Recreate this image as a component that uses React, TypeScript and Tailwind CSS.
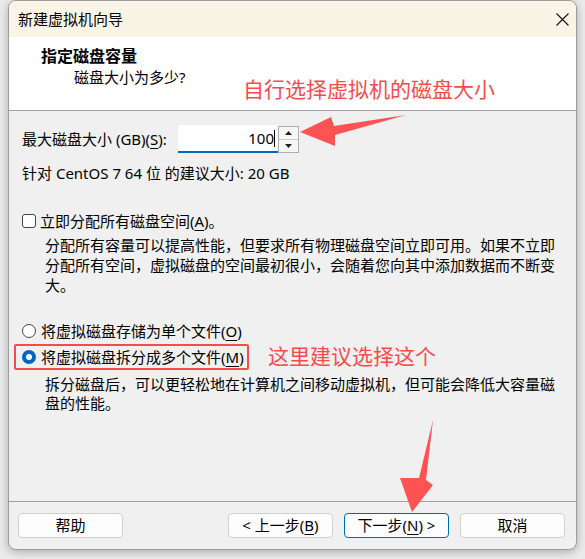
import React from 'react';

const U = ({ children }: { children: React.ReactNode }) => (
  <span className="underline decoration-1 underline-offset-[3px]">{children}</span>
);

const Btn = ({ children, primary }: { children: React.ReactNode; primary?: boolean }) => (
  <button
    className={
      primary
        ? 'flex h-[25px] w-[105px] items-center justify-center rounded-[4px] border border-[#0067c0] bg-[#fdfdfd] text-[15px] leading-none text-black'
        : 'flex h-[25px] w-[105px] items-center justify-center rounded-[4px] border border-[#d0d0d0] bg-[#fdfdfd] text-[15px] leading-none text-black'
    }
  >
    {children}
  </button>
);

export default function App() {
  return (
    <div className="relative h-[559px] w-[585px] overflow-hidden bg-[#ebebeb] font-['Noto_Sans','Noto_Sans_CJK_SC',sans-serif] text-black">
      <div className="ml-[8px] flex h-[550px] w-[569px] flex-col overflow-hidden rounded-[8px] border border-[#9c9c9c] bg-[#f0f0f0] shadow-[0_2px_10px_rgba(0,0,0,0.28)]">
        {/* title bar */}
        <div className="flex h-[36px] items-center justify-between bg-[#f9f4e6] pl-[9px] pr-[7px]">
          <span className="text-[15px]">新建虚拟机向导</span>
          <svg width="13" height="13" viewBox="0 0 13 13">
            <path d="M0.5 0.5 L12.5 12.5 M12.5 0.5 L0.5 12.5" stroke="#111" strokeWidth="1.1" />
          </svg>
        </div>

        {/* header */}
        <div className="relative h-[74px] border-b border-[#a0a0a0] bg-white pt-[9px]">
          <div className="pl-[32px] text-[16px] font-bold leading-[20px]">指定磁盘容量</div>
          <div className="mt-[1px] pl-[65px] text-[15px] leading-[20px]">磁盘大小为多少?</div>
          <div className="absolute left-[234px] top-[38px] text-[21px] leading-[28px] text-[#f54b4b]">
            自行选择虚拟机的磁盘大小
          </div>
        </div>

        {/* body */}
        <div className="flex-1 pl-[13px] text-[15px]">
          <div className="mt-[14px] flex h-[28px] items-center">
            <span className="w-[156px] leading-[20px]">
              最大磁盘大小 (GB)(<U>S</U>):
            </span>
            <div className="flex h-[28px] w-[100px] items-center justify-end border-b-2 border-[#0067c0] bg-white pr-[3px]">
              <span className="leading-[20px]">100</span>
              <span className="h-[17px] w-px bg-black" />
            </div>
            <div className="flex h-[27px] w-[21px] flex-col self-end border border-[#adadad] bg-[#f7f7f7]">
              <div className="flex flex-1 items-center justify-center border-b border-[#c8c8c8]">
                <svg width="7" height="4" viewBox="0 0 7 4">
                  <path d="M0 4 L3.5 0 L7 4 Z" fill="#222" />
                </svg>
              </div>
              <div className="flex flex-1 items-center justify-center">
                <svg width="7" height="4" viewBox="0 0 7 4">
                  <path d="M0 0 L3.5 4 L7 0 Z" fill="#222" />
                </svg>
              </div>
            </div>
          </div>

          <div className="mt-[10px] leading-[20px]">针对 CentOS 7 64 位 的建议大小: 20 GB</div>

          <div className="mt-[28px] flex h-[20px] items-center gap-[4px]">
            <span className="h-[14px] w-[14px] rounded-[3px] border border-[#444] bg-white" />
            <span className="leading-[20px]">
              立即分配所有磁盘空间(<U>A</U>)。
            </span>
          </div>
          <div className="mt-[4px] pl-[23px] leading-[20px]">
            分配所有容量可以提高性能，但要求所有物理磁盘空间立即可用。如果不立即
            <br />
            分配所有空间，虚拟磁盘的空间最初很小，会随着您向其中添加数据而不断变
            <br />
            大。
          </div>

          <div className="mt-[26px] flex h-[20px] items-center gap-[5px]">
            <span className="h-[14px] w-[14px] rounded-full border border-[#444] bg-white" />
            <span className="leading-[20px]">
              将虚拟磁盘存储为单个文件(<U>O</U>)
            </span>
          </div>
          <div className="relative mt-[6px] flex h-[20px] items-center gap-[5px]">
            <span className="flex h-[14px] w-[14px] items-center justify-center rounded-full bg-[#0067c0]">
              <span className="h-[6px] w-[6px] rounded-full bg-white" />
            </span>
            <span className="leading-[20px]">
              将虚拟磁盘拆分成多个文件(<U>M</U>)
            </span>
            <span className="absolute -left-[8px] -top-[3px] h-[26px] w-[235px] rounded-[2px] border-2 border-[#f54b4b]" />
            <span className="absolute left-[246px] -top-[5px] text-[21px] leading-[28px] text-[#f54b4b]">
              这里建议选择这个
            </span>
          </div>
          <div className="mt-[8px] pl-[23px] leading-[19px]">
            拆分磁盘后，可以更轻松地在计算机之间移动虚拟机，但可能会降低大容量磁
            <br />
            盘的性能。
          </div>
        </div>

        {/* footer */}
        <div className="flex h-[48px] items-start border-t border-[#a0a0a0] pl-[9px] pr-[11px] pt-[11px]">
          <Btn>帮助</Btn>
          <div className="ml-auto flex gap-[11px]">
            <Btn>
              &lt; 上一步(<U>B</U>)
            </Btn>
            <Btn primary>
              下一步(<U>N</U>) &gt;
            </Btn>
            <Btn>取消</Btn>
          </div>
        </div>
      </div>

      {/* annotation arrows */}
      <svg className="pointer-events-none absolute left-0 top-0" width="585" height="559" viewBox="0 0 585 559">
        <path d="M406 115 L334 126 L331 117 L300 132 L335 146 L335 135 Z" fill="#ff5252" />
        <path d="M433 420 L426 480 L433 485 L412 512 L400 478 L419 478 Z" fill="#ff5252" />
      </svg>
    </div>
  );
}
